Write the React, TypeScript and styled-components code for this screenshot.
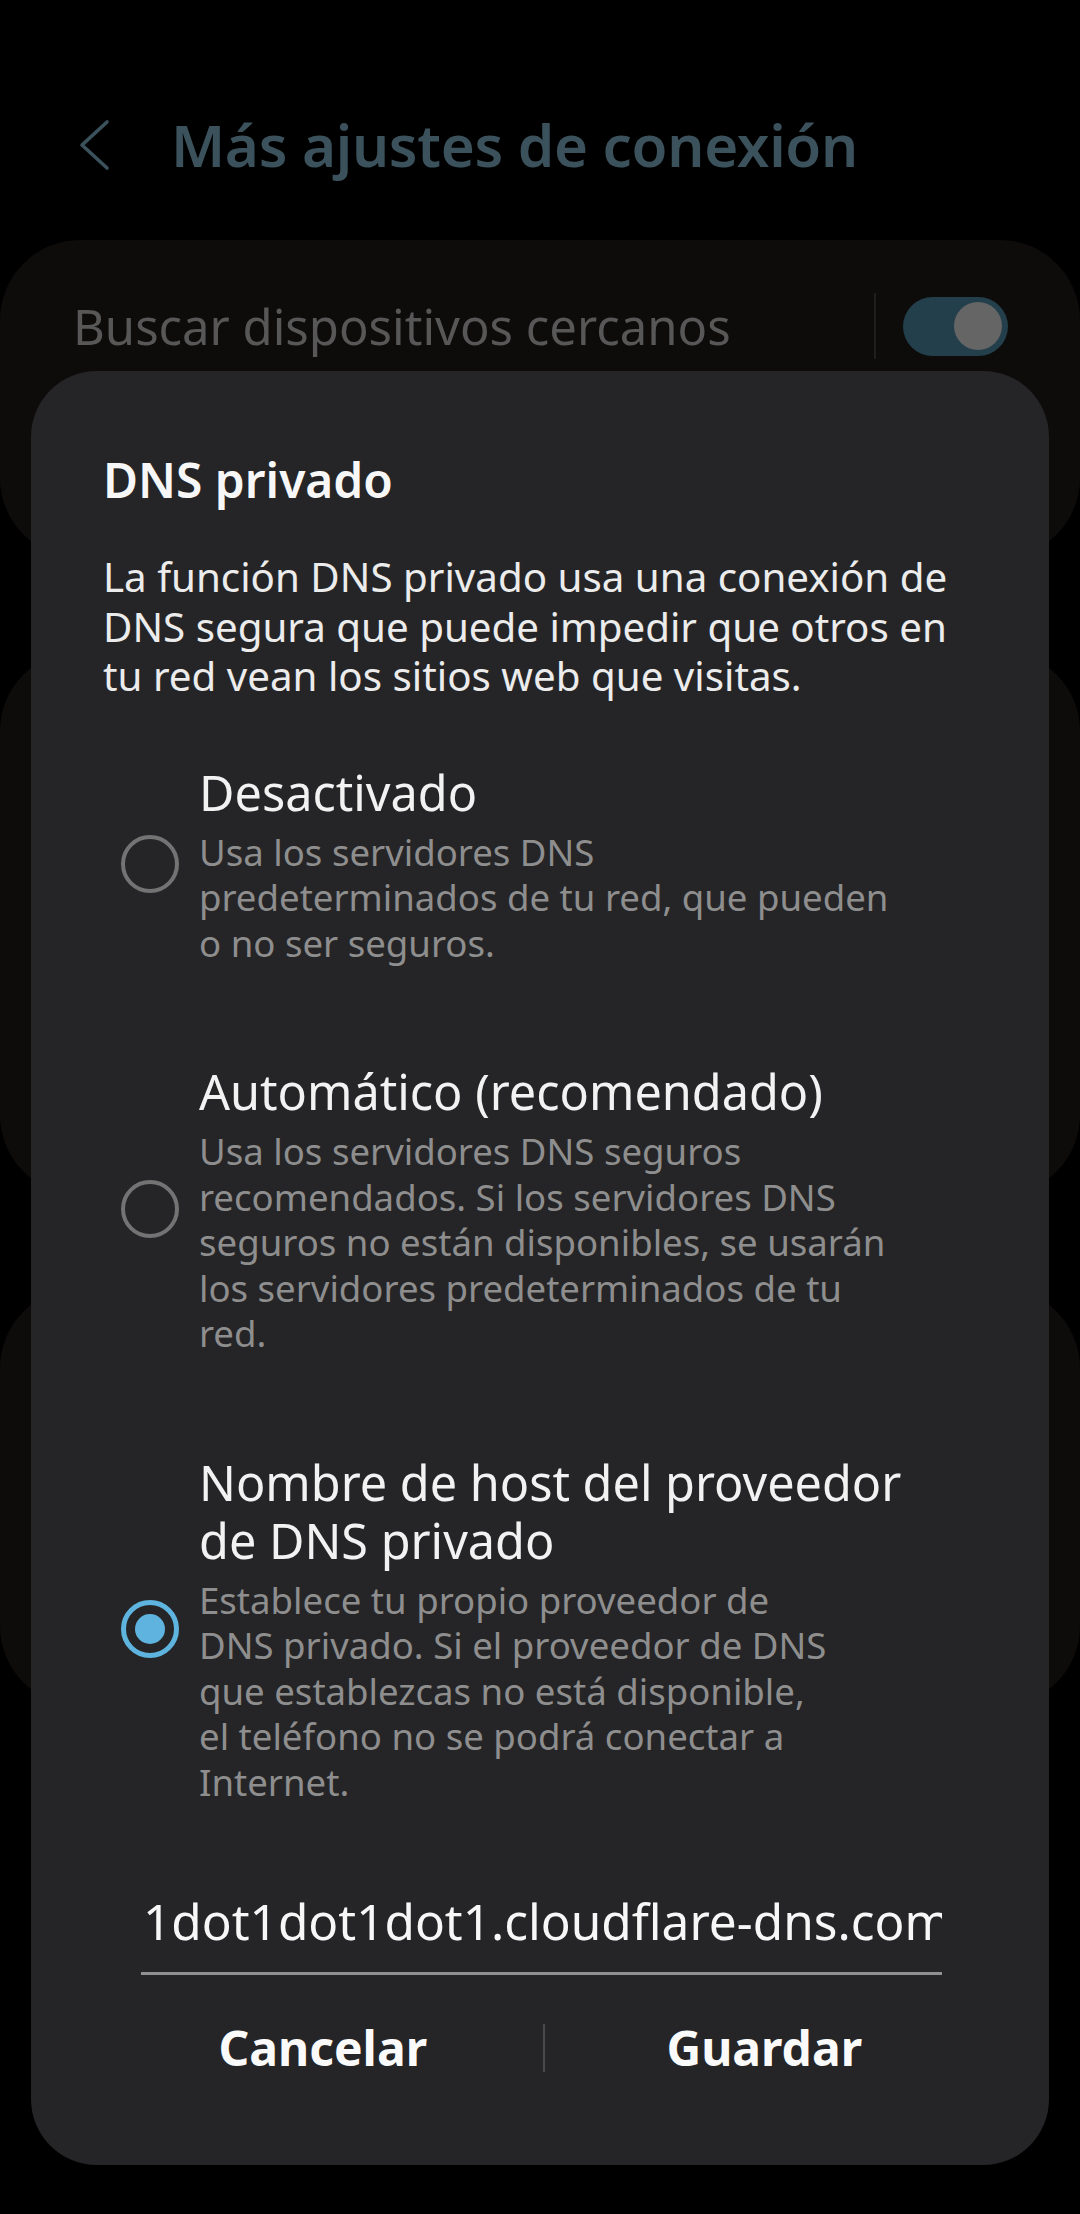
import React from "react";
import styled, { createGlobalStyle } from "styled-components";

const GlobalStyle = createGlobalStyle`
  html, body {
    margin: 0;
    padding: 0;
    background: #000;
  }
  body {
    font-family: "Noto Sans", "Open Sans", sans-serif;
    -webkit-font-smoothing: antialiased;
  }
  * { box-sizing: border-box; }
`;

const Screen = styled.div`
  position: relative;
  width: 1080px;
  height: 2214px;
  background: #000;
  overflow: hidden;
`;

const Header = styled.header`
  display: flex;
  align-items: center;
  height: 240px;
  padding: 50px 0 0 78px;
`;

const BackIcon = styled.svg`
  width: 32px;
  height: 52px;
  flex: none;
`;

const HeaderTitle = styled.h1`
  margin: 0 0 0 61px;
  font-size: 58.3px;
  font-weight: 600;
  color: #3b525c;
  letter-spacing: -0.3px;
  line-height: 1.2;
`;

const CardList = styled.div`
  display: flex;
  flex-direction: column;
  gap: 93px;
`;

const Card = styled.section<{ $h: number }>`
  height: ${(p) => p.$h}px;
  background: #0e0b0b;
  border-radius: 80px;
`;

const SettingRow = styled.div`
  display: flex;
  align-items: center;
  height: 172px;
  padding: 0 72px 0 73px;
`;

const SettingLabel = styled.span`
  flex: 1;
  font-size: 49px;
  color: #575757;
  line-height: 1.2;
`;

const VDivider = styled.span`
  width: 2px;
  height: 66px;
  background: #1f1d1d;
  margin-right: 27px;
`;

const Toggle = styled.span`
  display: flex;
  align-items: center;
  justify-content: flex-end;
  width: 105px;
  height: 59px;
  padding-right: 6px;
  border-radius: 30px;
  background: #233f4b;
`;

const Thumb = styled.span`
  width: 48px;
  height: 48px;
  border-radius: 50%;
  background: #656565;
`;

const Dialog = styled.div`
  position: absolute;
  left: 31px;
  top: 371px;
  width: 1018px;
  height: 1794px;
  background: #252527;
  border-radius: 66px;
  padding-top: 80px;
  display: flex;
  flex-direction: column;
`;

const DialogTitle = styled.h2`
  margin: 0;
  padding-left: 72px;
  font-size: 47.9px;
  font-weight: 600;
  line-height: 57px;
  color: #f7f7f7;
`;

const DialogText = styled.p`
  margin: 44px 0 14px;
  padding-left: 72px;
  font-size: 40.3px;
  line-height: 49.5px;
  color: #ececec;
`;

const Option = styled.div`
  display: flex;
  align-items: center;
  gap: 20px;
  padding: 48px 0 48px 90px;
`;

const Radio = styled.span<{ $on?: boolean }>`
  flex: none;
  display: flex;
  align-items: center;
  justify-content: center;
  width: 58px;
  height: 58px;
  border-radius: 50%;
  border: ${(p) => (p.$on ? "5px solid #5eb4de" : "4px solid #737373")};
`;

const RadioDot = styled.span`
  width: 30px;
  height: 30px;
  border-radius: 50%;
  background: #5eb4de;
`;

const OptionText = styled.div`
  display: flex;
  flex-direction: column;
`;

const OptionTitle = styled.span`
  font-size: 48.6px;
  line-height: 58px;
  color: #f2f2f2;
`;

const OptionDesc = styled.span`
  margin-top: 9px;
  font-size: 36.6px;
  line-height: 45.5px;
  color: #8e8e8e;
`;

const HostField = styled.div`
  margin: 38px 107px 0 110px;
  padding: 0 0 21px 2px;
  border-bottom: 3px solid #909090;
  overflow: hidden;
  white-space: nowrap;
  font-size: 49.5px;
  line-height: 60px;
  color: #f7f7f7;
`;

const ButtonRow = styled.div`
  display: flex;
  align-items: center;
  height: 100px;
  margin-top: 23px;
  padding: 0 65px 0 72px;
`;

const DialogButton = styled.button`
  flex: 1;
  background: none;
  border: none;
  padding: 0;
  font-family: inherit;
  font-size: 48px;
  font-weight: 700;
  color: #fafafa;
  line-height: 1.2;
  text-align: center;
`;

const ButtonDivider = styled.span`
  width: 2px;
  height: 48px;
  background: #4a4a4c;
`;

type Opt = { title: string[]; desc: string[]; on?: boolean };

const options: Opt[] = [
  {
    title: ["Desactivado"],
    desc: [
      "Usa los servidores DNS",
      "predeterminados de tu red, que pueden",
      "o no ser seguros.",
    ],
  },
  {
    title: ["Automático (recomendado)"],
    desc: [
      "Usa los servidores DNS seguros",
      "recomendados. Si los servidores DNS",
      "seguros no están disponibles, se usarán",
      "los servidores predeterminados de tu",
      "red.",
    ],
  },
  {
    title: ["Nombre de host del proveedor", "de DNS privado"],
    desc: [
      "Establece tu propio proveedor de",
      "DNS privado. Si el proveedor de DNS",
      "que establezcas no está disponible,",
      "el teléfono no se podrá conectar a",
      "Internet.",
    ],
    on: true,
  },
];

const Lines = ({ lines }: { lines: string[] }) => (
  <>
    {lines.map((l, i) => (
      <React.Fragment key={i}>
        {i > 0 && <br />}
        {l}
      </React.Fragment>
    ))}
  </>
);

export default function App() {
  return (
    <Screen>
      <GlobalStyle />
      <Header>
        <BackIcon viewBox="0 0 32 52" fill="none">
          <path
            d="M29 3 L4 26 L29 49"
            stroke="#3b525c"
            strokeWidth="3.6"
            strokeLinecap="round"
            strokeLinejoin="round"
          />
        </BackIcon>
        <HeaderTitle>Más ajustes de conexión</HeaderTitle>
      </Header>
      <CardList>
        <Card $h={318}>
          <SettingRow>
            <SettingLabel>Buscar dispositivos cercanos</SettingLabel>
            <VDivider />
            <Toggle>
              <Thumb />
            </Toggle>
          </SettingRow>
        </Card>
        <Card $h={544} />
        <Card $h={418} />
      </CardList>

      <Dialog>
        <DialogTitle>DNS privado</DialogTitle>
        <DialogText>
          <Lines
            lines={[
              "La función DNS privado usa una conexión de",
              "DNS segura que puede impedir que otros en",
              "tu red vean los sitios web que visitas.",
            ]}
          />
        </DialogText>
        {options.map((o, i) => (
          <Option key={i}>
            <Radio $on={o.on}>{o.on && <RadioDot />}</Radio>
            <OptionText>
              <OptionTitle>
                <Lines lines={o.title} />
              </OptionTitle>
              <OptionDesc>
                <Lines lines={o.desc} />
              </OptionDesc>
            </OptionText>
          </Option>
        ))}
        <HostField>1dot1dot1dot1.cloudflare-dns.com</HostField>
        <ButtonRow>
          <DialogButton>Cancelar</DialogButton>
          <ButtonDivider />
          <DialogButton>Guardar</DialogButton>
        </ButtonRow>
      </Dialog>
    </Screen>
  );
}
